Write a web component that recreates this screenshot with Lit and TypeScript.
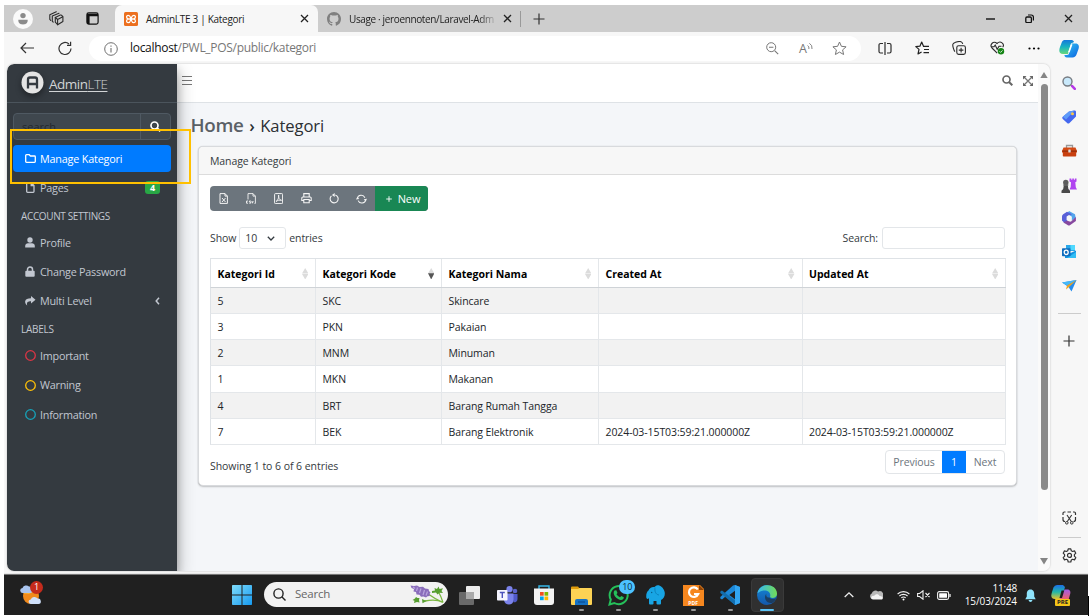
import { LitElement, html, css, svg } from "lit";
import { customElement, property } from "lit/decorators.js";
import { classMap } from "lit/directives/class-map.js";

type Icon = { w: number; h: number; body: unknown };
const line = (body: unknown, w = 16, h = 16): Icon => ({ w, h, body });

const ICONS: Record<string, Icon> = {
  user: line(svg`<circle cx="10" cy="10" r="10" fill="#fafafa"/><circle cx="10" cy="6.6" r="2.7" fill="#8b8b8b"/><path d="M5.4 10.8h9.2c.5 3-1.600 4.700-4.600 4.700s-5.100-1.700-4.600-4.700z" fill="#8b8b8b"/>`, 20, 20),
  workspaces: line(svg`<g fill="none" stroke="#2b2b2b" stroke-width="1.100" stroke-linejoin="round" stroke-linecap="round"><path d="M6.300 6.400l5-2.300q1.100-.4 1.700.6l.9 1.200v4.600l-5.300 3.200-2.300-2.500z"/><path d="M6.300 6.400l2.300 2.100v5.200M8.600 8.500l5.200-2.700"/><path d="M4.200 11.200l-.9-1V5.100L10 2.200M1.700 9.300L.8 8.400V3.800L7.300.8"/></g>`, 15, 15),
  tabs: line(svg`<rect x=".9" y=".9" width="11.200" height="11.200" rx="1.800" fill="none" stroke="#111" stroke-width="1.200"/><path d="M1 1.800h11v2.500H1zM1 4h2.600v8H1z" fill="#111"/>`, 13, 13),
  xampp: line(svg`<rect width="14" height="14" rx="1.500" fill="#ec6f1e"/><path d="M4.200 3.300c-2.200 0-2 3.300 0 3.500h5.600c2-.2 2.200-3.500 0-3.500S7.800 5 7 7s-.6 3.700-2.800 3.700-2-3.300 0-3.500h5.600c2 .2 2.200 3.500 0 3.500S7.800 9 7 7 6.400 3.300 4.200 3.300z" fill="none" stroke="#fff" stroke-width="1.300"/>`, 14, 14),
  close: line(svg`<path d="M1 1l7 7M8 1L1 8" stroke="#222" stroke-width="1.300"/>`, 9, 9),
  github: line(svg`<path fill="#808080" d="M8 0C3.580 0 0 3.580 0 8c0 3.540 2.290 6.530 5.470 7.590.4.070.55-.17.55-.38 0-.19-.01-.82-.01-1.490-2.010.37-2.530-.49-2.690-.94-.09-.23-.48-.94-.82-1.130-.28-.15-.68-.52-.01-.53.63-.01 1.080.58 1.230.82.72 1.210 1.870.87 2.330.66.070-.52.28-.87.51-1.070-1.780-.2-3.640-.89-3.640-3.950 0-.87.31-1.590.82-2.150-.08-.2-.36-1.020.08-2.120 0 0 .67-.21 2.200.82a7.600 7.600 0 0 1 4 0c1.530-1.040 2.200-.82 2.200-.82.44 1.100.16 1.920.08 2.120.51.56.82 1.270.82 2.150 0 3.070-1.870 3.750-3.650 3.950.29.25.54.73.54 1.480 0 1.070-.01 1.930-.01 2.200 0 .21.15.46.55.38A8 8 0 0 0 16 8c0-4.420-3.580-8-8-8z"/>`),
  plus: line(svg`<path d="M6 .5v11M.5 6h11" stroke="#333" stroke-width="1.200"/>`, 12, 12),
  minimize: line(svg`<path d="M0 5h9" stroke="#111" stroke-width="1.400"/>`, 9, 10),
  restore: line(svg`<rect x=".8" y="3" width="5.600" height="5.600" rx="1.200" fill="none" stroke="#111" stroke-width="1.300"/><path d="M3 1h3.200a2.200 2.200 0 0 1 2.200 2.200V6.500" fill="none" stroke="#111" stroke-width="1.200"/>`, 9, 9),
  back: line(svg`<path d="M14 6H1.200M6 1L1 6l5 5" fill="none" stroke="#333" stroke-width="1.200"/>`, 15, 12),
  reload: line(svg`<path d="M13 7.500A6 6 0 1 1 11 3M12.600.8v3.500H9" fill="none" stroke="#333" stroke-width="1.200"/>`, 15, 15),
  info: line(svg`<circle cx="7" cy="7" r="6.300" fill="none" stroke="#707070"/><path d="M7 6v4.400M7 3.500v1.200" stroke="#707070" stroke-width="1.100"/>`, 14, 14),
  zoomout: line(svg`<circle cx="5.200" cy="5.200" r="4.500" fill="none" stroke="#777"/><path d="M8.600 8.600l3.600 3.600M3 5.200h4.400" stroke="#777" stroke-width="1.100"/>`, 13, 13),
  star: line(svg`<path d="M7.500 1l1.900 4.300 4.700.5-3.500 3.100 1 4.600-4.100-2.400-4.100 2.400 1-4.600L.9 5.800l4.700-.5z" fill="none" stroke="#777" stroke-linejoin="round"/>`, 15, 15),
  waves: line(svg`<path d="M.6 3.500q1.800 1 1.300 3.500M2.400 1.300q3.200 1.900 2.600 5.700" fill="none" stroke="#777" stroke-width=".9"/>`, 6, 8),
  split: line(svg`<path d="M5 1.500H2.500A1.500 1.500 0 0 0 1 3v6.500A1.500 1.500 0 0 0 2.500 11H5M9 1.500h2.500A1.500 1.500 0 0 1 13 3v6.500a1.500 1.500 0 0 1-1.500 1.500H9M7 0v13" fill="none" stroke="#2b2b2b" stroke-width="1.200"/>`, 14, 13),
  favs: line(svg`<path d="M8.500 5.200L6.700 1 4.900 5.200l-4.100.4L4 8.400l-1 4.500L6.600 11M8 5.300h6M9 8.500h5M8.500 11.600H14" fill="none" stroke="#222" stroke-width="1.200" stroke-linejoin="round"/>`, 15, 14),
  collect: line(svg`<g fill="none" stroke="#2b2b2b" stroke-width="1.100"><rect x="4.800" y="4.800" width="8.600" height="8.600" rx="1.800"/><path d="M9.100 6.800v4.600M6.800 9.100h4.600M3 10.600C1.700 9.500.6 5 .8 3.500S2 1.800 3.500 1.300 8 .4 9 .7s1.500 1.300 1.700 2.300"/></g>`, 14, 14),
  heart: line(svg`<g fill="none" stroke="#2b2b2b" stroke-width="1.100"><path d="M7.200 12.200L2 7C-.8 3.800 3.500-1 7 2.500 10.500-1 15 3 12.700 6.300M1 5.800h3l1.200-1.800L7.200 8.300 9 5.300h2.500"/></g><circle cx="11" cy="10.300" r="3.200" fill="#148414"/><path d="M9.500 10.300l1.100 1.100 1.900-2" fill="none" stroke="#fff" stroke-width=".8"/>`, 15, 14),
  dots: line(svg`<circle cx="1.500" cy="1.500" r="1.100"/><circle cx="6" cy="1.500" r="1.100"/><circle cx="10.500" cy="1.500" r="1.100"/>`, 12, 3),
  copilot: line(svg`<defs><linearGradient id="c1" x2="0" y2="1"><stop stop-color="#1478dc"/><stop offset=".5" stop-color="#18b4c0"/><stop offset="1" stop-color="#67d77b"/></linearGradient><linearGradient id="c2" x2="1" y2="1"><stop stop-color="#35c9f5"/><stop offset="1" stop-color="#0c62df"/></linearGradient></defs><path d="M6.500 1h6.200c1.400 0 2 1 2.300 2L12 4.500 9 15H4C.2 15-.4 12 1 8L2.700 3.500C3.500 1.600 4.400 1 6.500 1z" fill="url(#c1)"/><path d="M13 4.500h3.300c3.500 0 4.200 2.500 3.200 5.500l-1.800 5c-.8 2.300-2 3.500-4.200 3.500H7.800c-1.600 0-2.200-1.100-2.400-2.500H8c1.500 0 1.800-1 2.200-2.300z" fill="url(#c2)"/><path d="M11.800 5.500h1.700L10.700 13.300H9z" fill="#fff"/>`, 21, 19),
  bars: line(svg`<path d="M0 1.500h10M0 5.500h10M0 9.500h10" stroke="#777" stroke-width="1.200"/>`, 10, 11),
  glass: line(svg`<circle cx="4.500" cy="4.500" r="3.500" fill="none" stroke="currentColor" stroke-width="1.700"/><path d="M7 7l3.300 3.300" stroke="currentColor" stroke-width="2"/>`, 11, 11),
  expand: line(svg`<path d="M1 1l8 8M9 1L1 9" stroke="#777" stroke-width="1.300"/><path d="M0 0h3.500L0 3.500zM10 0v3.500L6.500 0zM0 10V6.500L3.500 10zM10 10H6.500L10 6.500z" fill="#666"/>`, 10, 10),
  folder: line(svg`<path d="M.7 1.500c0-.5.300-.8.800-.8h2.700l1.300 1.300h4c.5 0 .8.300.8.800v4.700c0 .5-.3.800-.8.800h-8c-.5 0-.8-.3-.8-.8z" fill="none" stroke="currentColor" stroke-width="1.300"/>`, 11, 9),
  file: line(svg`<path d="M5 .7H1.500c-.5 0-.8.300-.8.800v8c0 .5.300.8.800.8h5.700c.5 0 .8-.3.800-.8V3.500L5.200.7v2.800H8" fill="none" stroke="currentColor" stroke-width="1.300"/>`, 9, 11),
  person: line(svg`<circle cx="5" cy="3" r="2.700" fill="currentColor"/><path d="M.2 10.500V9C.2 7 1.500 6.200 3 6.200h4c1.500 0 2.800.8 2.800 2.800v1.500z" fill="currentColor"/>`, 10, 11),
  lock: line(svg`<path d="M2.500 5V3.500a2.500 2.500 0 0 1 5 0V5" fill="none" stroke="currentColor" stroke-width="1.500"/><rect x=".3" y="4.800" width="9.400" height="6" rx="1" fill="currentColor"/>`, 10, 11),
  share: line(svg`<path d="M7 0l4.500 3.800L7 7.500V5.200C4 5.200 2.300 6 3.200 9.500 0 7 0 2.300 7 2.300z" fill="currentColor"/>`, 12, 10),
  ring: line(svg`<circle cx="5.500" cy="5.500" r="4.800" fill="none" stroke="currentColor" stroke-width="1.300"/>`, 11, 11),
  left: line(svg`<path d="M4 .8L1.200 4 4 7.200" fill="none" stroke="currentColor" stroke-width="1.500"/>`, 5, 8),
  excel: line(svg`<path d="M1 .6h5l2.400 2.500v7.300H1zM6 .6v2.500h2.400M3 5l3.500 4M6.500 5L3 9" fill="none" stroke="#f4f4f4"/>`, 9, 11),
  csv: line(svg`<path d="M2 6.500V.6h5l2.400 2.500v7.300H8.500M7 .6v2.500h2.400M2 8H.5v2.200H2M4.800 8H3.400v1h1.300v1.200H3.300M5.800 8l.7 2.200L7.200 8" fill="none" stroke="#f4f4f4" stroke-width=".9"/>`, 10, 11),
  pdf: line(svg`<rect x=".6" y=".6" width="8" height="10" rx=".8" fill="none" stroke="#f4f4f4"/><path d="M2 8.500c2-1 2.800-3.500 2.600-6.500C4.500 5 5.500 7 7.500 7.300 5.500 7 3.500 7.300 2 8.500z" fill="none" stroke="#f4f4f4" stroke-width=".9"/>`, 9, 11),
  print: line(svg`<path d="M2.800 4V.6h5.400V4M2.500 7.500H.8V5c0-.7.300-1 1-1h7.400c.7 0 1 .3 1 1v2.500H8.500M2.800 6.500h5.400v3.300H2.800z" fill="none" stroke="#f4f4f4" stroke-width="1.100"/>`, 11, 11),
  undo: line(svg`<path d="M6.300 2A4 4 0 1 1 2.400 2.900" fill="none" stroke="#f4f4f4" stroke-width="1.100"/><path d="M5.700 0v4L2.900 2z" fill="#f4f4f4"/>`, 10, 11),
  sync: line(svg`<path d="M1.300 4.500a4 4 0 0 1 7.600-.8M9.700 5.800a4 4 0 0 1-7.600.8" fill="none" stroke="#f4f4f4" stroke-width="1.100"/><path d="M0 5.600l1.300-2.500 2 2zM11 4.700L9.800 7.300l-2.100-2z" fill="#f4f4f4"/>`, 11, 10),
  plusS: line(svg`<path d="M3 .2v5.600M.2 3h5.600" stroke="#fff" stroke-width=".9"/>`, 6, 6),
  down: line(svg`<path d="M.8.800L4 4 7.200.8" fill="none" stroke="#343a40" stroke-width="1.300"/>`, 8, 5),
  sort: line(svg`<path d="M0 5.500L3.200 0l3.200 5.500zM0 6L3.200 11.500 6.400 6z" fill="#dcdcdc"/>`, 6.4, 11.5),
  sortDown: line(svg`<path d="M0 5.500L3.200 0l3.200 5.500z" fill="#dcdcdc"/><path d="M0 5.200h6.400L3.200 11.500z" fill="#555"/>`, 6.4, 11.5),
  triUp: line(svg`<path d="M0 6.500L4 0l4 6.500z" fill="#858585"/>`, 8, 6.5),
  triDown: line(svg`<path d="M0 0h8L4 6.500z" fill="#858585"/>`, 8, 6.5),
  lens: line(svg`<circle cx="5.500" cy="5.500" r="4.500" fill="#c9e9fb" stroke="#777c82" stroke-width="1.400"/><path d="M9 9l1.500 1.500" stroke="#777" stroke-width="1.500"/><path d="M10.200 10.200l2.600 2.600" stroke="#b63be8" stroke-width="2.600" stroke-linecap="round"/>`, 14, 14),
  tag: line(svg`<path d="M7 1.500L12.500.5c1 0 1.500.5 1.500 1.500v4.500L7.500 13c-.8.800-1.600.8-2.400 0L.8 9C0 8 0 7.500.8 6.800z" fill="#4468ef"/><path d="M.8 6.800L7 1.500 12.500.5 4 9.500z" fill="#5e9bf8"/><circle cx="10.500" cy="3.800" r="1.500" fill="#f9c646"/>`, 14, 14),
  toolbox: line(svg`<path d="M4.500 4V1.500h6V4" fill="none" stroke="#999" stroke-width="1.300"/><path d="M1.500 3.500h12L15 7v1.500H0V7z" fill="#d34a14"/><rect x=".8" y="7" width="13.400" height="5.500" rx=".8" fill="#c8400f"/><path d="M.3 6.500h14.400v1.200H.3z" fill="#8d2b0a"/><rect x="6.300" y="5.500" width="2.400" height="3" rx=".6" fill="#ddd"/>`, 15, 13),
  chess: line(svg`<path d="M8.500.5h1.800v1.200h1V.5h1.600v1.200h1V.5h1.600v3l-1.200.8.500 5 1.200 2.200H8.500l1.200-2.500.3-4.700-1.500-.8z" fill="#b044f0"/><circle cx="4.800" cy="4.500" r="2.700" fill="#5d5d5d"/><path d="M3 6h3.600l.8 5 1.600 1.700V15H.5v-2.300L2.200 11z" fill="#4a4a4a"/><path d="M2 7h5.500" stroke="#777"/>`, 16, 15),
  m365: line(svg`<path d="M7 0l6 3.300.8 4L9.500 9.500V6L4.500 3.500z" fill="#54a4ec"/><path d="M5 .8L1.200 3.200Q0 4 0 5.500v4l3 3 2.500-2V5.500L10 3.300z" fill="#5960d8"/><path d="M13.900 6v4l-6 4.300q-1 .5-2 0L1.300 11.200 5.800 9.500l3 1.200z" fill="#87499f"/><path d="M4.600 5.500L7 4l2.700 1.500v3.600L7.200 10.500 4.600 9z" fill="#f7f7f7"/>`, 14, 15),
  outlook: line(svg`<path d="M4 0h9v6H4z" fill="#28a8ea"/><path d="M8.500 0H13v5H8.500z" fill="#50d9ff"/><path d="M3 6l5.500 2L14 5.500V13H3z" fill="#1490df"/><path d="M5 13l9-6v6z" fill="#31bdf4"/><rect y="3.300" width="8.500" height="8" rx=".8" fill="#0f6cbd"/><ellipse cx="4.200" cy="7.300" rx="2" ry="2.200" fill="none" stroke="#fff" stroke-width="1.300"/>`, 14, 13.5),
  plane: line(svg`<path d="M0 2.500L14.500 0 9.500 11.500 6.500 7z" fill="#268ced"/><path d="M0 2.500L14.500 0 5 5.500z" fill="#47b9f7"/><path d="M14.500 0L5 5.500 4 9.500 7 7z" fill="#efa31e"/>`, 15, 12),
  snip: line(svg`<path d="M1 4V2.300Q1 1 2.300 1H3.500M5.500 1H9M11 1h1.200q1.300 0 1.300 1.300V4M1 6v2.500Q1 10.500 3 10.500M13.500 6v2.500q0 2-2 2" fill="none" stroke="#333" stroke-width="1.200"/><path d="M5 4l4.300 6.500M9.700 4L5.300 10.500" stroke="#333" stroke-width="1.100"/><circle cx="4.800" cy="11.800" r="1.300" fill="none" stroke="#333"/><circle cx="9.800" cy="11.800" r="1.300" fill="none" stroke="#333"/>`, 15, 14),
  gear: line(svg`<path d="M6.200.8h2.600l.5 2 1.300.7 1.900-.6 1.300 2.300-1.400 1.400v1.600l1.400 1.400-1.300 2.300-1.900-.6-1.300.7-.5 2H6.200l-.5-2-1.300-.7-1.900.6L1.200 9.600l1.400-1.400V6.600L1.200 5.200l1.300-2.300 1.900.6 1.300-.7z" fill="none" stroke="#333" stroke-width="1.200" stroke-linejoin="round"/><circle cx="7.500" cy="7.400" r="2" fill="none" stroke="#333" stroke-width="1.200"/>`, 15, 15),
  weather: line(svg`<circle cx="11" cy="12" r="8" fill="#f08a1c"/><path d="M3.500 9.500a8 8 0 0 1 13-3.500L9 10z" fill="#f9b233"/><path d="M3 9a2.500 2.500 0 0 1-.5-5A4 4 0 0 1 9 2.500 3.500 3.500 0 0 1 11 9z" fill="#a9c4ee"/><path d="M11 20a2.300 2.300 0 0 1-.3-4.600 4 4 0 0 1 7-.8 2.700 2.700 0 0 1 .8 5.400z" fill="#cfe0fa"/>`, 22, 21),
  windows: line(svg`<defs><linearGradient id="w" x2="1" y2="1"><stop stop-color="#7fdcfb"/><stop offset="1" stop-color="#169af0"/></linearGradient></defs><path d="M.8 0h8.700v9.500H0V.8Q0 0 .8 0zM10.500 0h8.700q.8 0 .8.800v8.700h-9.500zM0 10.500h9.500V20H.8q-.8 0-.8-.8zM10.500 10.500H20v8.700q0 .8-.8.800h-8.700z" fill="url(#w)"/>`, 20, 20),
  search: line(svg`<circle cx="5.500" cy="5.500" r="4.600" fill="none" stroke="#222" stroke-width="1.400"/><path d="M8.800 8.800l3.700 3.700" stroke="#222" stroke-width="1.400"/>`, 13, 13),
  lavender: line(svg`<path d="M19 9.500Q25 14 33 17.500M33 17.500Q26 13.500 15 16M33 17.500Q31 11 28 6" fill="none" stroke="#79b53f" stroke-width="1.300"/><path d="M.5.500L4 1l3-.5L9.500 2l3.500-.3L15 3.500l3.500.5.500 2 1.500 1.500-1 1.500.3 2-2.300.3L16 12.500l-2.500-1L11 11.800 9.500 9.700 6.500 9.500 6 7 3.500 6.500 4 4 1.500 3z" fill="#8a6dbb"/><path d="M3 2l2 1.500M7.500 2.500L6.500 6M11 3.500L9.500 8M14.500 5L13 10M17.500 6.500L16 10.500" stroke="#b9a5de" stroke-width="1.200"/><path d="M22 6l3-.5L24.500 3l2.500 1L28.500 1.500 29.500 4l3.500-.8L31.500 6l1.500 2-3.500-.3-2 1.800-1.500-2L22 8zM6 12l-1 1.500L2.500 15l2 .8-.5 2.200 3-1 2.500.5L9 15l.5-2L7.500 13zM12 14l4.500 2-4 2.300z" fill="#569e30"/>`, 34, 19),
  taskview: line(svg`<rect x="7" y="0" width="14" height="13" rx="1" fill="#ececec"/><rect x="0" y="6" width="15" height="13" rx="1" fill="#777" opacity=".85"/><rect x="7" y="6" width="8" height="7" fill="#aaa"/>`, 21, 19),
  teams: line(svg`<circle cx="18" cy="5" r="2.300" fill="#5b62c9"/><circle cx="12.500" cy="3.200" r="3.100" fill="#7b83eb"/><path d="M15 8h5.500v5c0 2.500-2 3.500-4 3.300z" fill="#5059c9"/><path d="M7 7.500h9.500V14c0 6-9 6-9.500 0z" fill="#7b83eb"/><rect y="4" width="10.500" height="10.500" rx=".8" fill="#f5f5ff"/><path d="M2.800 6.500h5M5.300 6.500V12" stroke="#4b53bc" stroke-width="1.400"/>`, 21, 19),
  store: line(svg`<path d="M5 4V1h10v3" fill="none" stroke="#37b8e9" stroke-width="1.400"/><path d="M0 3.500h20V17q0 3-3 3H3q-3 0-3-3z" fill="#f3f3f3"/><path d="M6 7h3.700v3.700H6z" fill="#f25022"/><path d="M10.500 7h3.700v3.700h-3.700z" fill="#7fba00"/><path d="M6 11.500h3.700v3.700H6z" fill="#00a4ef"/><path d="M10.500 11.500h3.700v3.700h-3.700z" fill="#ffb900"/>`, 20, 20),
  explorer: line(svg`<path d="M0 1.500Q0 .5 1 .5h6l2 2.500H0z" fill="#e09c0b"/><path d="M0 3h7l1.500-1H20q1 0 1 1v15q0 1-1 1H1q-1 0-1-1z" fill="#fcd254"/><path d="M4 19v-4q0-2 2-2h9q2 0 2 2v4z" fill="#1672c4"/><path d="M7 16h7" stroke="#0b4f97" stroke-width="1.300"/>`, 21, 19),
  whatsapp: line(svg`<path d="M1.500 19.500l1.300-5A9 9 0 1 1 6.300 18z" fill="none" stroke="#25c05a" stroke-width="2"/><path d="M6.500 5.500l1.800-.3 1.200 2.800-1 1.300q1.200 2.200 3.500 3l1.300-1.300 2.500 1.200c0 2-1.500 3-3.300 2.700-4-1-7-4.500-6.800-7.500.1-.8.400-1.500.8-1.900z" fill="#25c05a"/>`, 21, 21),
  elephant: line(svg`<path d="M2.500 5.500C.5 7 0 10 .3 12.500c.2 1.700 1.900 1.800 2.700.5v5.500q0 1 1 1h2.500q1 0 1-1V16h3v2.500q0 1 1 1H14q1 0 1-1V15c3-1.500 4.500-5 3.500-8.500C17.300 2.500 14 0 11.500.3 10 .5 9.300 1.200 8.500 2 6 1.500 3.500 3 2.500 5.500z" fill="#18a5e4"/><path d="M9 2.500C8.500 6 9.500 9.500 13 10" fill="none" stroke="#0b7fb8" stroke-width=".9"/><circle cx="5.700" cy="7.500" r=".7" fill="#075a88"/>`, 19, 20),
  foxit: line(svg`<path d="M0 0h17l4 4v17H0z" fill="#f6871f"/><path d="M16 0l5 5h-5z" fill="#8d4406"/><path d="M14.800 4.500A4.800 4.800 0 1 0 15.200 9H11" fill="none" stroke="#fff" stroke-width="2.200"/>`, 21, 21),
  vscode: line(svg`<path d="M15 0l5 2v16l-5 2L5.500 11.500 2 14.500.3 13.500V12L13 .5z" fill="#1c88d8"/><path d="M.3 6.500L2 5.500l13 10V20L.3 8z" fill="#136dad"/><path d="M15 0l5 2v16l-5 2z" fill="#32a5f1"/><path d="M15 5.800V14.300L9.300 10z" fill="#202020"/>`, 20, 20),
  edge: line(svg`<defs><linearGradient id="e1" x2="1"><stop stop-color="#35b8f4"/><stop offset="1" stop-color="#72dd55"/></linearGradient><linearGradient id="e2" x2="0" y2="1"><stop stop-color="#1387d8"/><stop offset="1" stop-color="#1457a8"/></linearGradient></defs><circle cx="10" cy="10" r="10" fill="url(#e2)"/><path d="M.3 8.500C2-2.500 19.500-2.500 20 8.500c.3 4-4.500 5.500-7 3.500 2-6-6-9.500-12.700-3.500z" fill="url(#e1)"/><path d="M12.500 12.500c1.500 2 5 2 6.800.5-.7 2-2.300 4-4.300 5-5 1-9.500-5-5.500-9.500-1 1.800.5 4.500 3 4z" fill="#202020" opacity=".55"/>`, 20, 20),
  up: line(svg`<path d="M.7 5L5 .9 9.300 5" fill="none" stroke="#eee" stroke-width="1.300"/>`, 10, 6),
  cloud: line(svg`<path d="M3 9a3 3 0 0 1-.3-5.500A4 4 0 0 1 9 1.500 3.500 3.500 0 0 1 12 9z" fill="#b9b9b9"/><path d="M4 9.500C1 9.500 2 5 5 6c1.500-2.500 5-2 5.500 0 3.500-.3 4.500 3.500 1.500 3.500z" fill="#f4f4f4"/>`, 14, 10),
  wifi: line(svg`<g fill="none" stroke="#f0f0f0" stroke-width="1.100"><path d="M.6 4a8.500 8.500 0 0 1 11.800 0M2.400 6a6 6 0 0 1 8.200 0M4.300 7.900a3.400 3.400 0 0 1 4.400 0"/></g><circle cx="6.500" cy="9.500" r="1" fill="#fff"/>`, 13, 11),
  mute: line(svg`<path d="M.6 3.500h2L6 .8v8.400L2.600 6.500h-2zM8.500 3l4 4M12.500 3l-4 4" fill="none" stroke="#f0f0f0" stroke-width="1.100"/>`, 13, 10),
  battery: line(svg`<rect x=".6" y=".6" width="11" height="7.800" rx="1.600" fill="none" stroke="#f0f0f0" stroke-width="1.100"/><rect x="2.200" y="2.200" width="7.800" height="4.600" rx=".5" fill="#fff"/><path d="M13 3v3" stroke="#f0f0f0" stroke-width="1.300"/>`, 14, 9),
  bell: line(svg`<path d="M5.500.5C2.500.5 1.800 3 1.800 5v2.500L.3 10.200h10.400L9.200 7.500V5c0-2-.7-4.500-3.700-4.500z" fill="#8fe3fb"/><path d="M3.500 11h4q-.5 2-2 2t-2-2z" fill="#8fe3fb"/>`, 11, 13),
  copilotPre: line(svg`<defs><linearGradient id="p1" x2="0" y2="1"><stop stop-color="#1c6fe8"/><stop offset=".5" stop-color="#22b7a8"/><stop offset="1" stop-color="#e5c22e"/></linearGradient><linearGradient id="p2" x2="0" y2="1"><stop stop-color="#a25ce8"/><stop offset="1" stop-color="#f4615c"/></linearGradient></defs><path d="M6 0h6l2 2-3.500 12H4C0 14-.3 11 1 7L2.500 2.500Q3.500 0 6 0z" fill="url(#p1)"/><path d="M13.500 4.500H16c3 0 4 2 3 5L17.500 15H8z" fill="url(#p2)"/><path d="M10.500 5.500h2.800L11 13H8.500z" fill="#202020"/>`, 21, 16),
};

const ic = (name: string) => {
  const i = ICONS[name];
  return html`<svg width=${i.w} height=${i.h} viewBox="0 0 ${i.w} ${i.h}">${i.body}</svg>`;
};

const base = css`
  * { box-sizing: border-box; }
  svg { display: block; flex: none; }
  .c { display: flex; align-items: center; justify-content: center; }
`;

@customElement("browser-chrome")
class BrowserChrome extends LitElement {
  static styles = [base, css`
    :host { display: block; color: #222; }
    .tabs { display: grid; height: 27px; background: #cdcdcd; grid-template-columns: 37px 31px 43px 203px 202px 1px 36px 1fr 40px 38px 40px; }
    .tab { display: flex; align-items: center; padding: 0 9px; font-size: 10px; letter-spacing: -.3px; white-space: nowrap; }
    .tab .t { flex: 1; margin-left: 8px; }
    .acts { padding-right: 3px; }
    .active { background: #f7f7f7; border-radius: 7px 7px 0 0; }
    .second .t { letter-spacing: -.36px; -webkit-mask-image: linear-gradient(90deg, #000 84%, transparent 97%); mask-image: linear-gradient(90deg, #000 84%, transparent 97%); }
    .second svg:first-child { width: 14px; height: 14px; }
    .second svg:last-child { margin-right: -1px; }
    .sep { background: #999; margin: 6px 0 5px; }
    .bar { display: grid; height: 32px; background: #f7f7f7; grid-template-columns: 47px 28px 10px 772px 47px 28px 46px 30px 43px 28px; }
    .pill { background: #fff; border-radius: 13px; height: 25px; margin-top: 4px; display: grid; grid-template-columns: 41px 1fr 34px 34px 38px; align-items: center; }
    .info { padding-left: 2px; }
    .url { font-size: 12px; color: #777; letter-spacing: -.3px; }
    .url b { font-weight: 400; color: #111; }
    .aloud { font-size: 12.500px; color: #777; }
    .aloud svg { margin-top: -6px; }
    .fav { padding-right: 5px; }
  `];
  render() {
    return html`
      <div class="tabs">
        <div class="c">${ic("user")}</div><div class="c">${ic("workspaces")}</div><div class="c acts">${ic("tabs")}</div>
        <div class="tab active">${ic("xampp")}<span class="t">AdminLTE 3 | Kategori</span>${ic("close")}</div>
        <div class="tab second">${ic("github")}<span class="t">Usage · jeroennoten/Laravel-Adm</span>${ic("close")}</div>
        <div class="sep"></div><div class="c">${ic("plus")}</div><div></div>
        <div class="c">${ic("minimize")}</div><div class="c">${ic("restore")}</div><div class="c">${ic("close")}</div>
      </div>
      <div class="bar">
        <div class="c">${ic("back")}</div><div class="c">${ic("reload")}</div><div></div>
        <div class="pill">
          <div class="c info">${ic("info")}</div>
          <div class="url"><b>localhost</b>/PWL_POS/public/kategori</div>
          <div class="c">${ic("zoomout")}</div><div class="c aloud">A${ic("waves")}</div><div class="c fav">${ic("star")}</div>
        </div>
        ${["split", "favs", "collect", "heart", "dots", "copilot"].map((n) => html`<div class="c">${ic(n)}</div>`)}
      </div>`;
  }
}

@customElement("nav-item")
class NavItem extends LitElement {
  @property() icon = "";
  @property() label = "";
  @property() badge = "";
  @property() tone = "";
  @property({ type: Boolean }) active = false;
  @property({ type: Boolean }) tree = false;
  static styles = [base, css`
    :host { display: block; height: 29.300px; color: #c2c7d0; }
    .item { display: flex; align-items: center; height: 27.300px; padding: 0 11px; border-radius: 4px; font-size: 10.800px; letter-spacing: -.24px; }
    .active { background: #007bff; color: #fff; letter-spacing: -.18px; }
    .i { width: 12px; margin-right: 4px; }
    .red { color: #dc3545; } .yellow { color: #ffc107; } .teal { color: #17a2b8; }
    .label { flex: 1; }
    .badge { background: #28a745; color: #fff; font-weight: 700; font-size: 9px; border-radius: 3px; width: 15px; height: 13px; }
  `];
  render() {
    return html`<div class=${classMap({ item: true, active: this.active })}>
      <span class="c i ${this.tone}">${ic(this.icon)}</span><span class="label">${this.label}</span>
      ${this.badge ? html`<span class="c badge">${this.badge}</span>` : ""}${this.tree ? ic("left") : ""}
    </div>`;
  }
}

@customElement("side-nav")
class SideNav extends LitElement {
  static styles = [base, css`
    :host { display: block; width: 170px; background: #343a40; border-radius: 7px 0 0 7px; box-shadow: 0 8px 18px rgba(0,0,0,.33), 0 6px 8px rgba(0,0,0,.2); z-index: 2; }
    .brand { height: 39px; border-bottom: 1px solid #4b545c; display: flex; align-items: center; padding: 0 0 1px 14px; color: #d2d4d6; font-size: 13.500px; }
    .brand svg { filter: drop-shadow(0 3px 3px rgba(0,0,0,.4)); }
    .name { margin: 3px 0 0 5px; text-decoration: underline; text-underline-offset: 2px; letter-spacing: -.5px; }
    .light { font-weight: 300; }
    .search { display: grid; grid-template-columns: 1fr 30px; margin: 10px 6px 5px; height: 27px; border: 1px solid #4f5962; border-radius: 4px; background: #3f474e; }
    .hint { color: #23292e; font-size: 11px; padding: 5px 8px; }
    .btn { border-left: 1px solid #4f5962; color: #fff; }
    .list { padding: 0 6px; color: #c2c7d0; }
    .head { font-size: 10px; letter-spacing: -.37px; padding-left: 8px; height: 25px; display: flex; align-items: center; }
    .head.two { height: 25.600px; letter-spacing: -.25px; }
  `];
  render() {
    return html`
      <div class="brand"><svg width="23" height="23" viewBox="0 0 23 23"><circle cx="11.500" cy="11.500" r="11" fill="#e4e4e4"/><path d="M7 17.500V8.500Q7 6.500 9 6.500h5q2 0 2 2v9M7 13h9" fill="none" stroke="#343a40" stroke-width="2.300"/></svg>
        <span class="name">Admin<span class="light">LTE</span></span></div>
      <div class="search"><span class="hint">search</span><span class="c btn">${ic("glass")}</span></div>
      <div class="list">
        <nav-item icon="folder" label="Manage Kategori" active></nav-item>
        <nav-item icon="file" label="Pages" badge="4"></nav-item>
        <div class="head">ACCOUNT SETTINGS</div>
        <nav-item icon="person" label="Profile"></nav-item>
        <nav-item icon="lock" label="Change Password"></nav-item>
        <nav-item icon="share" label="Multi Level" tree></nav-item>
        <div class="head two">LABELS</div>
        <nav-item icon="ring" tone="red" label="Important"></nav-item>
        <nav-item icon="ring" tone="yellow" label="Warning"></nav-item>
        <nav-item icon="ring" tone="teal" label="Information"></nav-item>
      </div>`;
  }
}

const COLUMNS = ["Kategori Id", "Kategori Kode", "Kategori Nama", "Created At", "Updated At"];
const STAMP = "2024-03-15T03:59:21.000000Z";
const ROWS = [
  ["5", "SKC", "Skincare", "", ""],
  ["3", "PKN", "Pakaian", "", ""],
  ["2", "MNM", "Minuman", "", ""],
  ["1", "MKN", "Makanan", "", ""],
  ["4", "BRT", "Barang Rumah Tangga", "", ""],
  ["7", "BEK", "Barang Elektronik", STAMP, STAMP],
];

@customElement("kategori-page")
class KategoriPage extends LitElement {
  static styles = [base, css`
    :host { display: block; flex: 1; background: #f4f6f9; color: #343a40; font-size: 10.500px; letter-spacing: -.09px; min-width: 0; }
    .nav { height: 39px; background: #fff; border-bottom: 1px solid #dee2e6; display: flex; align-items: center; padding: 0 5px 5px; color: #666; }
    .nav .grow { flex: 1; }
    .nav .x { margin-left: 10.500px; }
    .title { height: 43px; display: flex; align-items: baseline; padding: 9px 0 0 13.500px; color: #2b2f33; font-size: 16.600px; letter-spacing: -.07px; white-space: pre; }
    .title b { font-size: 18.800px; font-weight: 600; color: #5a6066; letter-spacing: -.3px; }
    .title i { font-style: normal; font-weight: 600; padding: 0 1.300px; }
    .card { margin: 0 0 0 21px; width: 819px; height: 339.500px; background: #fff; border: 1px solid #d8dadd; border-radius: 5px; box-shadow: 0 0 1px rgba(0,0,0,.2), 0 1px 2px rgba(0,0,0,.2); overflow: hidden; }
    .ch { height: 28px; background: #f7f7f7; border-bottom: 1px solid #dcdcdc; padding: 1px 11px 0; display: flex; align-items: center; }
    .body { padding: 11px 10px 0 11px; }
    .btns { display: grid; grid-template-columns: repeat(6, 27.500px) 53px; width: 218px; height: 25px; border-radius: 4px; overflow: hidden; background: #6c757d; }
    .new { background: #198754; color: #fff; gap: 6px; font-size: 11px; padding-left: 3px; }
    .ctl { display: flex; align-items: center; height: 22px; margin-top: 16px; gap: 3px; }
    .sel { width: 47px; height: 22px; border: 1px solid #e3e6e9; border-radius: 3px; display: flex; align-items: center; justify-content: space-between; padding: 0 10px 0 5px; }
    .grow { flex: 1; }
    .inp { width: 123px; height: 22px; border: 1px solid #e3e6e9; border-radius: 3px; margin: 0 1px 0 1px; }
    .row { display: grid; grid-template-columns: 105px 126px 157px 203.500px 1fr; height: 26.150px; border-bottom: 1px solid #e4e7ea; border-left: 1px solid #dee2e6; color: #212529; }
    .row span { display: flex; align-items: center; justify-content: space-between; padding: 1.500px 7px 0 6.500px; border-right: 1px solid #e4e7ea; }
    .odd { background: #f2f2f2; }
    .head { margin-top: 9px; height: 30px; border-top: 1px solid #dee2e6; border-bottom: 1px solid #cfd3d7; color: #000; font-weight: 700; letter-spacing: 0; }
    .head span { padding-top: 3px; }
    .head svg { margin-top: -2px; }
    .foot { display: flex; justify-content: space-between; padding-right: 1px; }
    .foot p { margin: 14px 0 0; letter-spacing: -.05px; }
    .pages { display: grid; grid-template-columns: 56px 24px 38px; height: 24px; margin-top: 5px; border: 1px solid #e2e5e8; border-radius: 4px; color: #6c757d; overflow: hidden; }
    .pages span { padding-top: 1px; }
    .on { background: #007bff; color: #fff; margin: -1px 0; }
  `];
  render() {
    return html`
      <div class="nav">${ic("bars")}<span class="grow"></span>${ic("glass")}<span class="x">${ic("expand")}</span></div>
      <div class="title"><b>Home</b><i> › </i>Kategori</div>
      <div class="card">
        <div class="ch">Manage Kategori</div>
        <div class="body">
          <div class="btns">${["excel", "csv", "pdf", "print", "undo", "sync"].map((n) => html`<span class="c">${ic(n)}</span>`)}
            <span class="c new">${ic("plusS")}New</span></div>
          <div class="ctl">Show<span class="sel">10${ic("down")}</span>entries<span class="grow"></span>Search:<span class="inp"></span></div>
          <div class="row head">${COLUMNS.map((c, i) => html`<span>${c}${ic(i === 1 ? "sortDown" : "sort")}</span>`)}</div>
          ${ROWS.map((r, i) => html`<div class=${classMap({ row: true, odd: i % 2 === 0 })}>${r.map((v) => html`<span>${v}</span>`)}</div>`)}
          <div class="foot"><p>Showing 1 to 6 of 6 entries</p>
            <div class="pages"><span class="c">Previous</span><span class="c on">1</span><span class="c">Next</span></div></div>
        </div>
      </div>`;
  }
}

@customElement("task-bar")
class TaskBar extends LitElement {
  static styles = [base, css`
    :host { display: grid; height: 41px; background: #202020; border-top: 1px solid #777; color: #fff; align-items: stretch;
      grid-template-columns: 57px 162px 38px 3px 184px 3.400px repeat(9, 37.200px) 1fr 26px 28px 26px 14px 28px 59px 26px 36px 9px; }
    .weather, .app { position: relative; }
    .weather { padding: 0 3px 1px 0; }
    .n { position: absolute; left: 26px; top: 6px; width: 13px; height: 13px; border-radius: 50%; background: #c42b1c; font-size: 9px; }
    .pill { height: 25px; margin-top: 7px; background: #f2f2f2; border-radius: 13px; display: flex; align-items: center; padding: 0 4px 0 9px; color: #666; font-size: 11.500px; letter-spacing: -.2px; }
    .pill span { flex: 1; margin-left: 9px; }
    .sel { background: #303030; border: 1px solid #3a3a3a; border-radius: 4px; margin: 3px 2px; }
    .run::after { content: ""; position: absolute; bottom: 4px; width: 5px; height: 2px; border-radius: 1px; background: #999; }
    .sel::after { content: ""; position: absolute; bottom: 0; width: 14px; height: 2px; border-radius: 1px; background: #5cc3f5; }
    .count { position: absolute; left: 19px; top: 5px; width: 16px; height: 14px; border-radius: 7px; background: #4cc2ff; color: #062a3c; font-size: 9px; letter-spacing: -.3px; }
    .ext { position: absolute; bottom: 9px; font-size: 5px; line-height: 6px; font-weight: 700; }
    .clock { font-size: 10px; line-height: 13px; padding-top: 7px; letter-spacing: -.08px; white-space: nowrap; display: flex; flex-direction: column; align-items: flex-end; }
    .clock span:first-child { letter-spacing: -.2px; }
    .pre { position: relative; padding-bottom: 4px; }
    .tag { position: absolute; left: 12px; top: 24px; padding: 0 2px; height: 7px; border-radius: 1px; background: #f5c518; color: #222; font-size: 6px; font-weight: 700; line-height: 7px; }
  `];
  render() {
    return html`
      <div class="c weather">${ic("weather")}<span class="c n">1</span></div><div></div>
      <div class="c">${ic("windows")}</div><div></div>
      <div class="pill">${ic("search")}<span>Search</span>${ic("lavender")}</div><div></div>
      <div class="c app">${ic("taskview")}</div><div class="c app">${ic("teams")}</div><div class="c app">${ic("store")}</div>
      <div class="c app run">${ic("explorer")}</div>
      <div class="c app run">${ic("whatsapp")}<span class="c count">10</span></div>
      <div class="c app run">${ic("elephant")}</div>
      <div class="c app run">${ic("foxit")}<span class="ext">PDF</span></div>
      <div class="c app run">${ic("vscode")}</div><div class="c app sel">${ic("edge")}</div><div></div>
      ${["up", "cloud", "wifi", "mute", "battery"].map((n) => html`<div class="c">${ic(n)}</div>`)}
      <div class="clock"><span>11:48</span><span>15/03/2024</span></div>
      <div class="c">${ic("bell")}</div><div class="c pre">${ic("copilotPre")}<span class="tag">PRE</span></div>`;
  }
}

@customElement("app-root")
class AppRoot extends LitElement {
  static styles = [base, css`
    :host { display: flex; position: relative; width: 1090px; height: 616px; background: #fff; padding: 5px 1px 1px 4px; overflow: hidden; font-family: "Open Sans", "Noto Sans", sans-serif; line-height: 1.4; }
    .desk { width: 1084px; }
    .edge { width: 1px; height: 25px; background: #000; align-self: flex-end; }
    .work { display: flex; height: 510px; background: #f7f7f7; padding-left: 3px; border-bottom: 1px solid #e6e6e6; }
    .view { display: flex; width: 1043px; height: 507px; border-radius: 7px; overflow: hidden; box-shadow: 0 0 2px rgba(0,0,0,.25); }
    .scroll { width: 12px; background: #fafafa; display: flex; flex-direction: column; align-items: center; padding: 7.500px 0 6.500px; }
    .thumb { width: 7px; height: 406px; margin: 6px 0 auto; border-radius: 4px; background: #8a8a8a; }
    .tools { width: 38px; display: grid; justify-items: center; align-items: center; grid-template-rows: 37px 31px 36px 34px 33px 34px 34px 20px 36px 143px 32px 6px 30px; }
    .hr { width: 23px; height: 1px; background: #ccc; }
    .mark { position: absolute; left: 10px; top: 129px; width: 181px; height: 55px; border: 2px solid #ffc000; z-index: 5; }
  `];
  render() {
    return html`
      <div class="desk">
        <browser-chrome></browser-chrome>
        <div class="work">
          <div class="view"><side-nav></side-nav><kategori-page></kategori-page>
            <div class="scroll">${ic("triUp")}<div class="thumb"></div>${ic("triDown")}</div></div>
          <div class="tools">
            ${["lens", "tag", "toolbox", "chess", "m365", "outlook", "plane"].map((n) => html`<span>${ic(n)}</span>`)}
            <div class="hr"></div>${ic("plus")}<span></span>${ic("snip")}<div class="hr"></div>${ic("gear")}
          </div>
        </div>
        <task-bar></task-bar>
      </div>
      <div class="edge"></div>
      <div class="mark"></div>`;
  }
}
